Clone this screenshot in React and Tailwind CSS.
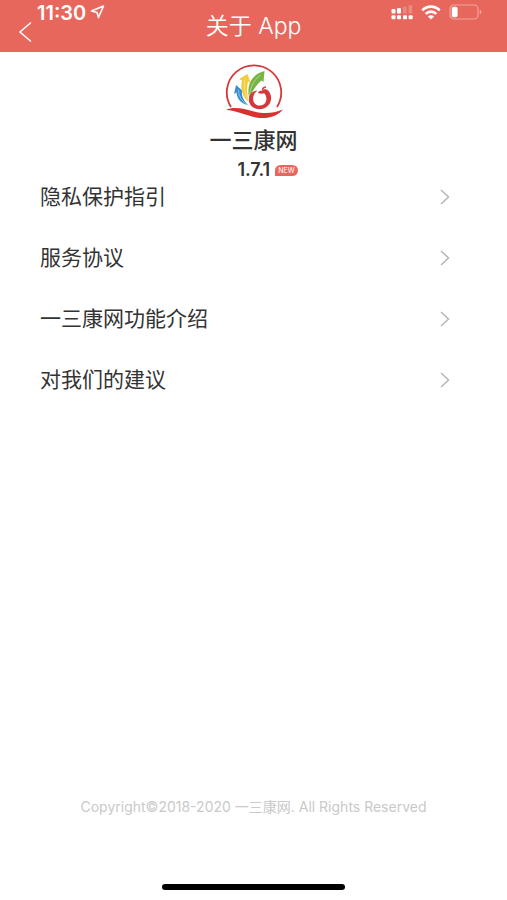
const menuItems = [
  { id: 'privacy', label: '隐私保护指引' },
  { id: 'terms', label: '服务协议' },
  { id: 'features', label: '一三康网功能介绍' },
  { id: 'feedback', label: '对我们的建议' },
];

const SignalIcon = () => (
  <svg width="22" height="16" viewBox="0 0 22 16" fill="#fff" aria-hidden="true">
    {/* Dual SIM: bars on top, dots below */}
    <rect x="0.5" y="5" width="4" height="4.4" rx="1" />
    <rect x="6" y="4" width="4" height="5.4" rx="1" />
    <rect x="12" y="2.5" width="3.6" height="7" rx="1" opacity="0.22" />
    <rect x="17.6" y="1" width="3.6" height="8.5" rx="1" opacity="0.22" />
    <rect x="0.5" y="11.2" width="4" height="4" rx="1" />
    <rect x="6" y="11.2" width="4" height="4" rx="1" />
    <rect x="12" y="11.2" width="4" height="4" rx="1" />
    <rect x="17.6" y="11.2" width="4" height="4" rx="1" />
  </svg>
);

const WifiIcon = () => (
  <svg width="20" height="15" viewBox="0 0 20 15" aria-hidden="true">
    <g fill="none" stroke="#fff" strokeWidth="2.6">
      <path d="M1.3 5.3C6.2 0.4 13.8 0.4 18.7 5.3" />
      <path d="M4.7 8.9C7.7 5.9 12.3 5.9 15.3 8.9" />
    </g>
    <path d="M10 14.6L6.9 11.5C8.7 9.9 11.3 9.9 13.1 11.5Z" fill="#fff" />
  </svg>
);

const BatteryIcon = () => (
  <svg width="34" height="16" viewBox="0 0 34 16" aria-hidden="true">
    <rect x="1" y="1" width="28" height="14" rx="4" fill="none" stroke="#fff" strokeOpacity="0.4" strokeWidth="1.2" />
    <rect x="2.8" y="2.8" width="5.8" height="10.4" rx="1.8" fill="#fff" />
    <path d="M30.8 5.6C32.8 6.6 32.8 9.4 30.8 10.4Z" fill="#fff" opacity="0.45" />
  </svg>
);

const Logo = () => (
  <svg width="60" height="58" viewBox="0 0 60 58" className="mt-1" role="img" aria-label="一三康网">
    {/* Ring, open at the bottom */}
    <path d="M7 45A27.200 27.200 0 1 1 53 45" fill="none" stroke="#d5373a" strokeWidth="1.8" />
    {/* Wave */}
    <path d="M2 48C10 44 20 47 30 49.500C40 52 49 51.500 59 47.500C53 54.500 43 57.500 32 55.500C21 53 12 48.500 2 48Z" fill="#d9312f" />
    {/* Leaves */}
    <path d="M12 23L10 32L12.500 30.500C13 37 17 42 24.500 43C20 39 17.500 35 18 29L20 30Z" fill="#3a90cf" />
    <path d="M23.500 12L15 17L18 18.500C16 26 18 34 24.500 40C23 32 22.500 26 24 19.500L26.500 21Z" fill="#f3cc3b" />
    <path d="M40.500 9C31 11 25 19 24.500 27C24.200 31 24.500 34 25.500 37C28 30 31 24 37.500 18.500L39.500 20Z" fill="#76b543" />
    <path d="M14.500 28C14.500 34 18 40 24 42.500M21 17C19.500 26 21 33 24.500 38.500M36.500 13C30 18 26 25 25.500 34" fill="none" stroke="#fff" strokeWidth="0.4" />
    {/* Apple */}
    <path d="M33.500 28.500C21.500 29.500 22 47 35 47.200C47.500 47 50 34 44 28.500L40 31C44.500 35.500 42.500 43.500 36 43.500C27.500 43.500 27 33 33.500 28.500Z" fill="#d5373a" />
    <path d="M34 31C37 32.200 41.500 32 44.500 29C42.500 26.500 39.500 26.500 38 29C36.500 28.200 34.700 29 34 31Z" fill="#d5373a" />
    <path d="M38.500 28.500C38.500 26.500 40 25.300 42 25" fill="none" stroke="#d5373a" strokeWidth="1.4" />
  </svg>
);

const Header = () => (
  <header className="grid h-[52px] grid-cols-[1fr_auto_1fr] bg-[#e8675d] text-white">
    <div className="flex gap-1 pl-[18px]">
      <button type="button" aria-label="返回" className="self-end pb-2">
        <svg width="15" height="24" viewBox="0 0 15 24" fill="none" stroke="#fff" strokeWidth="1.5" aria-hidden="true">
          <path d="M13 2.500L2 12L13 21.500" />
        </svg>
      </button>
      <div className="flex h-6 items-center gap-1">
        <span className="pt-[2px] text-[20px] leading-6 font-semibold">11:30</span>
        <svg width="15" height="14" viewBox="0 0 15 14" fill="none" stroke="#fff" strokeWidth="1.6" strokeLinejoin="round" aria-hidden="true">
          <path d="M13.500 1L1.500 6L7 7.500L8.500 12.500Z" />
        </svg>
      </div>
    </div>
    <h1 className="text-[23px] leading-[52px] font-[350]">关于 App</h1>
    <div className="flex h-6 items-center justify-end gap-2 pr-6">
      <SignalIcon />
      <WifiIcon />
      <BatteryIcon />
    </div>
  </header>
);

const App = () => {
  return (
    <div className="flex min-h-screen flex-col bg-white font-['Inter','Noto_Sans_CJK_SC',sans-serif] text-[#333]">
      <Header />

      <section className="flex flex-col items-center pt-[6px]">
        <Logo />
        <h2 className="mt-1 text-[22px] leading-8 font-medium">一三康网</h2>
        <div className="flex items-center gap-[5px] pl-7">
          <span className="text-[18px] leading-7 font-semibold">1.7.1</span>
          <span className="rounded-t-md rounded-br-md bg-[#e8675d] px-[3px] text-[7px] leading-[11px] text-white">NEW</span>
        </div>
      </section>

      <nav className="-mt-[18px]">
        <ul>
          {menuItems.map((item) => (
            <li key={item.id}>
              <a href={`#${item.id}`} className="flex h-[61px] items-center justify-between pr-14 pl-10">
                <span className="text-[21px] leading-8">{item.label}</span>
                <svg width="12" height="18" viewBox="0 0 12 18" fill="none" stroke="#b8b8b8" strokeWidth="1.6" aria-hidden="true">
                  <path d="M2 2L9.500 9L2 16" />
                </svg>
              </a>
            </li>
          ))}
        </ul>
      </nav>

      <footer className="mt-auto flex flex-col items-center pb-[10px]">
        <p className="text-[14px] leading-5 text-[#c9c9c9]">Copyright©2018-2020 一三康网. All Rights Reserved</p>
        {/* Home indicator */}
        <div className="mt-[67px] h-[6px] w-[36%] rounded-full bg-black" />
      </footer>
    </div>
  );
};

export default App;
